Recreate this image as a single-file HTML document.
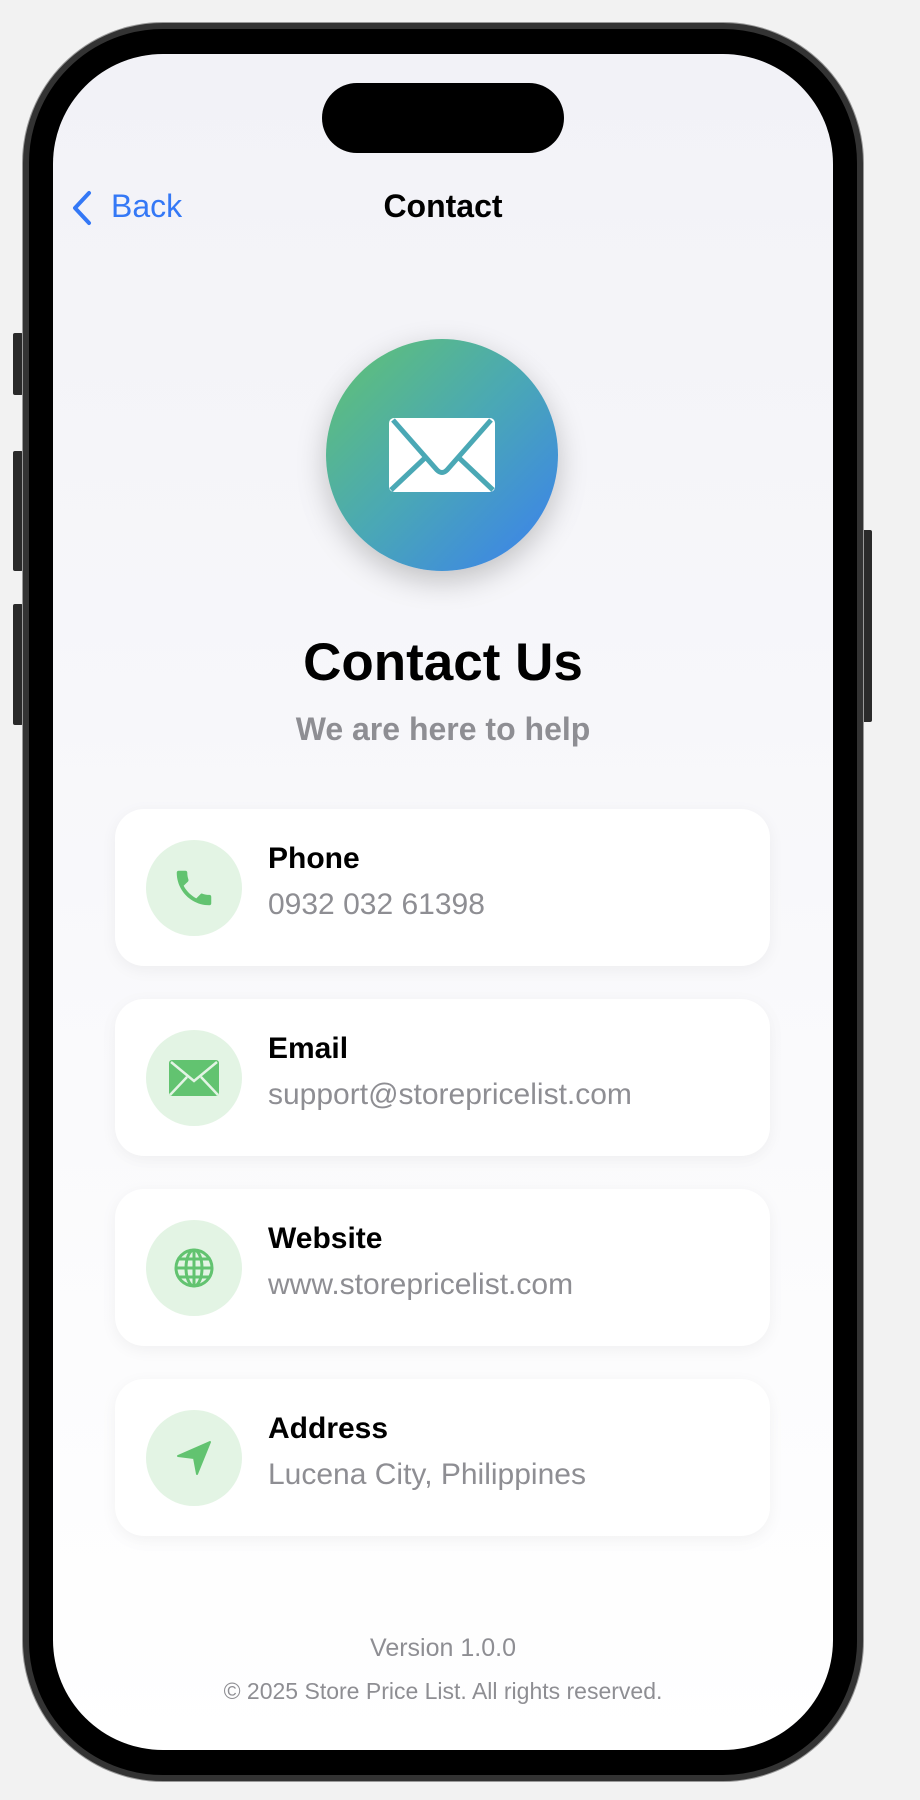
<!DOCTYPE html>
<html><head><meta charset="utf-8"><style>
*{margin:0;padding:0;box-sizing:border-box}
body{width:920px;height:1800px;background:#f2f2f2;position:relative;overflow:hidden;font-family:"Liberation Sans",sans-serif}
.frame{position:absolute;left:23px;top:23px;width:840px;height:1758px;border-radius:140px;background:#000;border:6px solid #333;box-shadow:0 0 0 1px #999}
.screen{position:absolute;left:53px;top:54px;width:780px;height:1696px;border-radius:110px;background:linear-gradient(#f2f2f7,#ffffff);overflow:hidden}
.btn{position:absolute;background:#2a2a2a;border-radius:2px}
.island{position:absolute;left:269px;top:29px;width:242px;height:70px;border-radius:35px;background:#000}
.abs{position:absolute}
.card{position:absolute;left:62px;width:655px;height:157px;background:#fff;border-radius:29px;box-shadow:0 4px 16px rgba(0,0,0,0.05)}
.ic{position:absolute;left:31px;top:31px;width:96px;height:96px;border-radius:50%;background:#e3f4e4;display:flex;align-items:center;justify-content:center}
.t{position:absolute;left:153px;top:33px;font-size:30px;font-weight:bold;color:#000}
.s{position:absolute;left:153px;top:79px;font-size:30px;color:#8e8e93}
</style></head><body>
<div class="btn" style="left:13px;top:333px;width:10px;height:62px"></div>
<div class="btn" style="left:13px;top:451px;width:10px;height:120px"></div>
<div class="btn" style="left:13px;top:604px;width:10px;height:121px"></div>
<div class="btn" style="left:862px;top:530px;width:10px;height:192px"></div>
<div class="frame"></div>
<div class="screen">
<div class="island"></div>
<svg class="abs" style="left:16px;top:136px" width="26" height="36" viewBox="0 0 26 36"><path d="M20 3 L6 18 L20 33" fill="none" stroke="#3478f6" stroke-width="4" stroke-linecap="round" stroke-linejoin="round"/></svg>
<div class="abs" style="left:58px;top:134px;font-size:32px;color:#3478f6">Back</div>
<div class="abs" style="left:0;width:780px;top:134px;text-align:center;font-size:32px;font-weight:bold;color:#000">Contact</div>
<div class="abs" style="left:273px;top:285px;width:232px;height:232px;border-radius:50%;background:linear-gradient(135deg,#62c370,#4aa8b5 50%,#3a7ff0);box-shadow:0 10px 30px rgba(0,0,0,0.22)"></div>
<svg class="abs" style="left:334px;top:362px" width="110" height="78" viewBox="0 0 110 78"><rect x="2" y="2" width="106" height="74" rx="5" fill="#fff"/><path d="M6 4 L50 54 Q55 59 60 54 L104 4 M4 74 L40 40 M106 74 L70 40" fill="none" stroke="#4aa8b5" stroke-width="5"/></svg>
<div class="abs" style="left:0;width:780px;top:578px;text-align:center;font-size:53px;font-weight:bold;color:#000">Contact Us</div>
<div class="abs" style="left:0;width:780px;top:657px;text-align:center;font-size:32px;font-weight:bold;color:#8e8e93">We are here to help</div>

<div class="card" style="top:755px"><div class="ic"><svg width="46" height="46" viewBox="0 0 24 24"><path d="M6.6 10.8c1.4 2.8 3.8 5.1 6.6 6.6l2.2-2.2c.3-.3.7-.4 1-.2 1.1.4 2.3.6 3.6.6.6 0 1 .4 1 1V20c0 .6-.4 1-1 1C10.6 21 3 13.4 3 4c0-.6.4-1 1-1h3.5c.6 0 1 .4 1 1 0 1.3.2 2.5.6 3.6.1.3 0 .7-.2 1z" fill="#62c370"/></svg></div><div class="t">Phone</div><div class="s">0932 032 61398</div></div>

<div class="card" style="top:945px"><div class="ic"><svg width="52" height="38" viewBox="0 0 52 38"><rect x="1" y="1" width="50" height="36" rx="3" fill="#62c370"/><path d="M3 3 L26 22 L49 3 M2 36 L19 18 M50 36 L33 18" fill="none" stroke="#e3f4e4" stroke-width="2.5"/></svg></div><div class="t">Email</div><div class="s">support@storepricelist.com</div></div>

<div class="card" style="top:1135px"><div class="ic"><svg width="42" height="42" viewBox="0 0 42 42" fill="none" stroke="#62c370" stroke-width="3"><circle cx="21" cy="21" r="18"/><ellipse cx="21" cy="21" rx="8" ry="18"/><path d="M21 3v36M3 21h36M6 12h30M6 30h30"/></svg></div><div class="t">Website</div><div class="s">www.storepricelist.com</div></div>

<div class="card" style="top:1325px"><div class="ic"><svg width="40" height="40" viewBox="0 0 40 40"><path d="M36 4 L4 18 L20 20 L23 36 Z" fill="#62c370" stroke="#62c370" stroke-width="2" stroke-linejoin="round"/></svg></div><div class="t">Address</div><div class="s">Lucena City, Philippines</div></div>

<div class="abs" style="left:0;width:780px;top:1580px;text-align:center;font-size:25px;color:#8e8e93">Version 1.0.0</div>
<div class="abs" style="left:0;width:780px;top:1624px;text-align:center;font-size:23px;color:#8e8e93">© 2025 Store Price List. All rights reserved.</div>
</div>
</body></html>
